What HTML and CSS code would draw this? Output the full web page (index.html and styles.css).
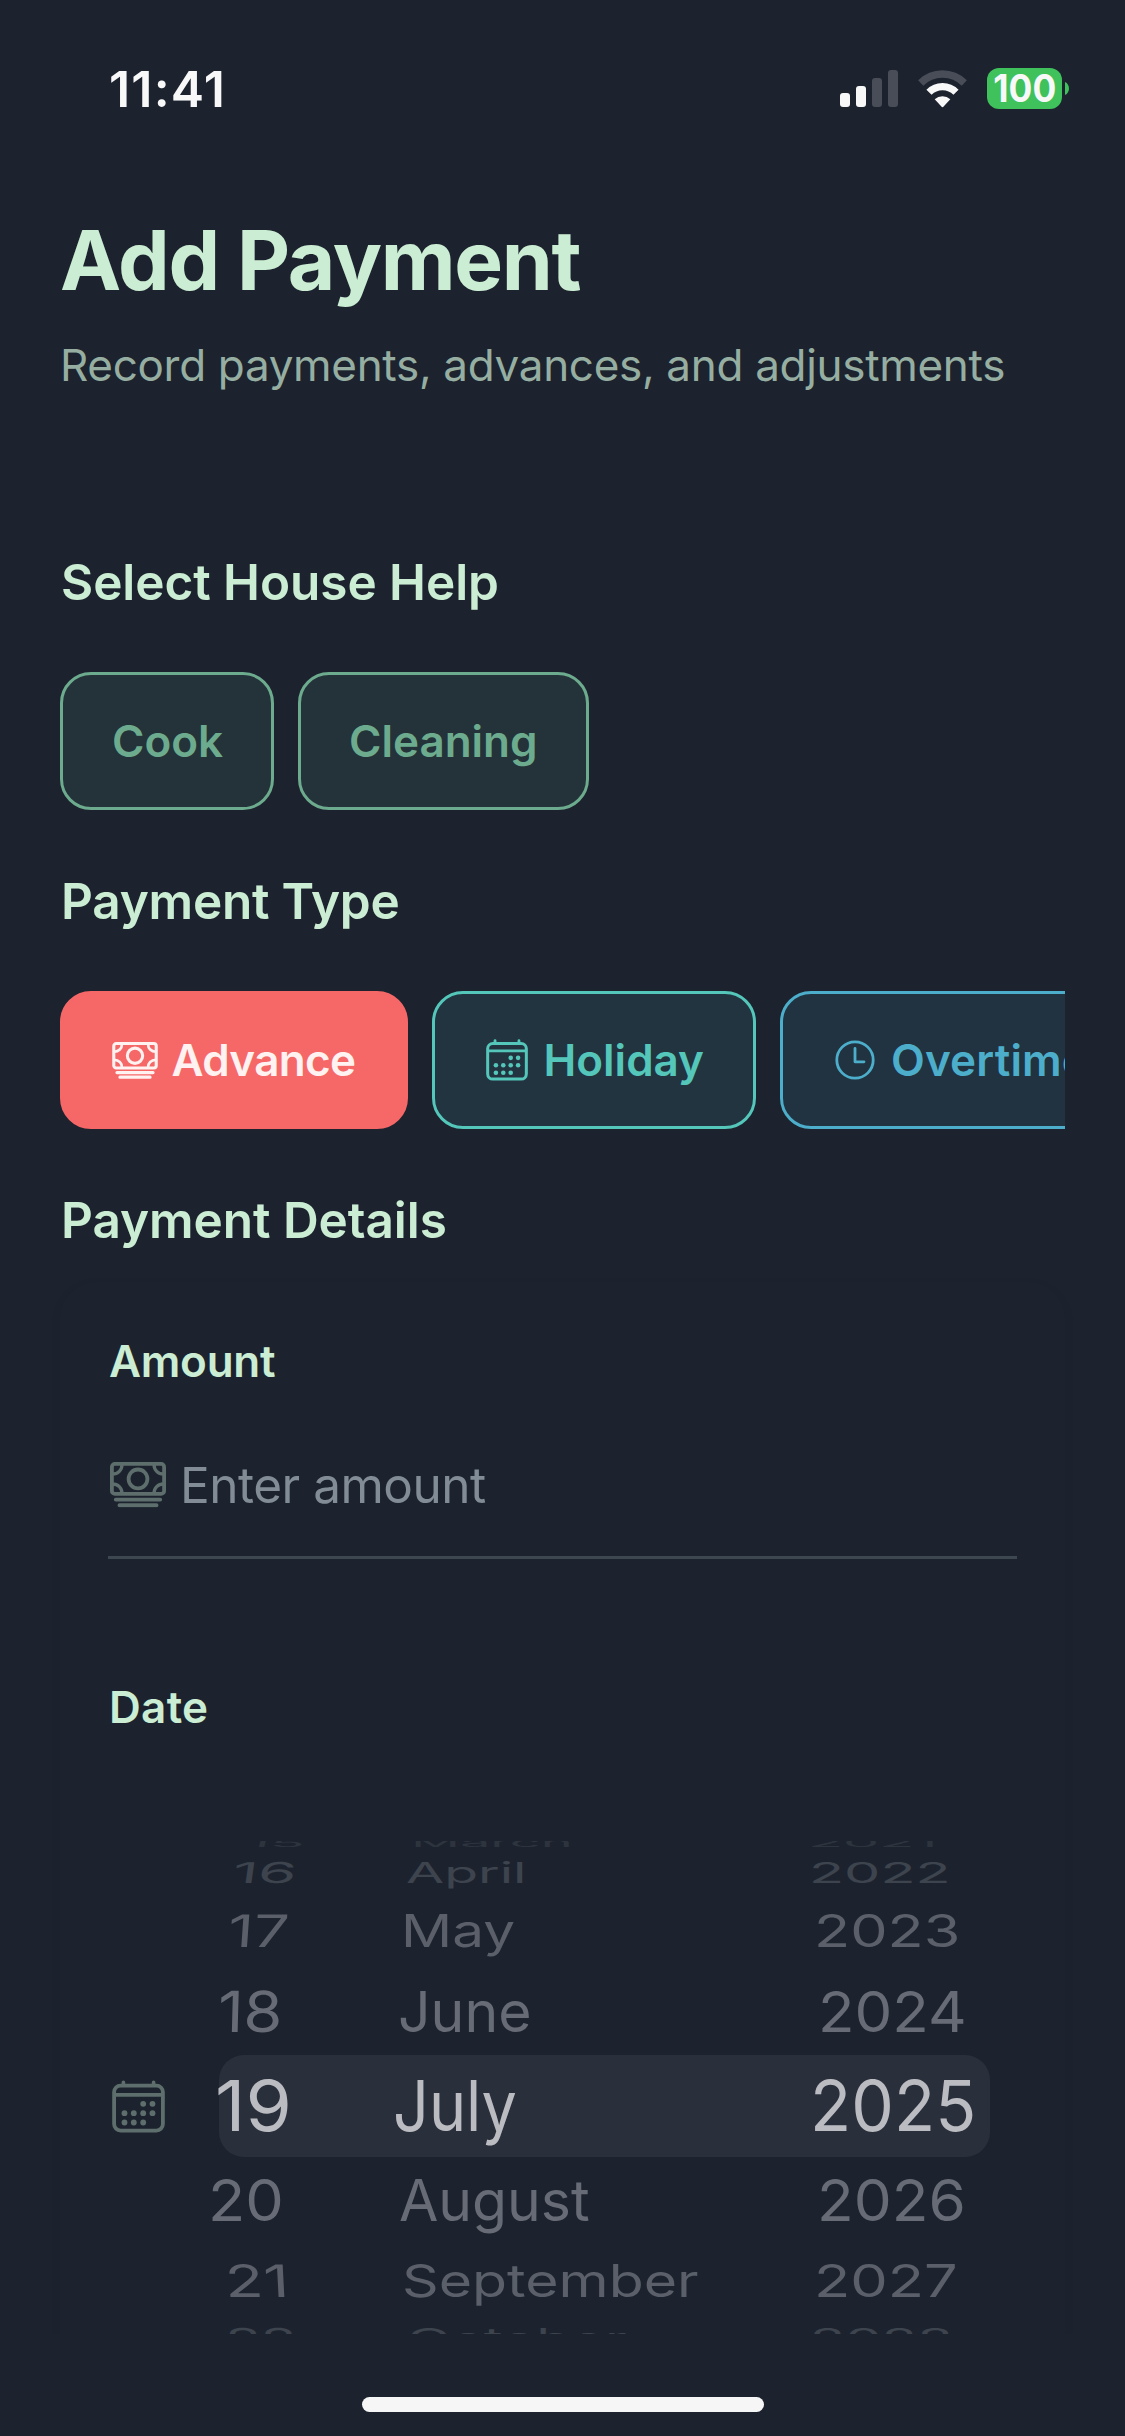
FILE: index.html
```html
<!DOCTYPE html>
<html lang="en">
<head>
<meta charset="utf-8">
<title>Add Payment</title>
<link rel="stylesheet" href="styles.css">
</head>
<body>
<svg class="defs" width="0" height="0" aria-hidden="true">
  <symbol id="banknote" viewBox="0 0 56 45.5">
    <g fill="none" stroke="currentColor" stroke-width="3.8" stroke-linecap="round">
      <rect x="1.9" y="1.9" width="52.2" height="30" rx="3"/>
      <circle cx="28" cy="16.9" r="9.4"/>
      <path d="M12 2.5C12 8 8 12 2.5 12M44 2.5C44 8 48 12 53.5 12M12 31.3C12 26 8 22 2.5 22M44 31.3C44 26 48 22 53.5 22" stroke-width="3.3"/>
      <path d="M5.8 37.6H50.2M9.5 43.2H46.5" stroke-width="3.9"/>
    </g>
  </symbol>
  <symbol id="calendar" viewBox="0 0 53 53">
    <g fill="none" stroke="currentColor" stroke-width="3.8" stroke-linecap="round">
      <rect x="2.1" y="5.6" width="48.8" height="45" rx="6.5"/>
      <path d="M3 14.9H50M11.4 2.2V5M41.6 2.2V5" stroke-width="3.6"/>
    </g>
    <g fill="currentColor">
      <circle cx="31.2" cy="23.8" r="2.9"/><circle cx="40.5" cy="23.8" r="2.9"/>
      <circle cx="12.5" cy="33.2" r="2.9"/><circle cx="21.8" cy="33.2" r="2.9"/><circle cx="31.2" cy="33.2" r="2.9"/><circle cx="40.5" cy="33.2" r="2.9"/>
      <circle cx="12.5" cy="42.5" r="2.9"/><circle cx="21.8" cy="42.5" r="2.9"/><circle cx="31.2" cy="42.5" r="2.9"/>
    </g>
  </symbol>
  <symbol id="clock" viewBox="0 0 40 40">
    <g fill="none" stroke="currentColor" stroke-width="2.8" stroke-linecap="round" stroke-linejoin="round">
      <circle cx="20" cy="20" r="18.2"/>
      <path d="M20 8.5V21.8H29"/>
    </g>
  </symbol>
</svg>

<header class="status">
  <span class="time">11:41</span>
  <div class="indicators">
    <svg class="signal" viewBox="0 0 58 37">
      <rect x="0" y="23" width="10" height="14" rx="3" fill="#f8f8f9"/>
      <rect x="16" y="16" width="10" height="21" rx="3" fill="#f8f8f9"/>
      <rect x="32" y="8" width="10" height="29" rx="3" fill="#484d57"/>
      <rect x="48" y="0" width="10" height="37" rx="3" fill="#484d57"/>
    </svg>
    <svg class="wifi" viewBox="0 0 51 38">
      <path d="M3.7 13A31 31 0 0 1 47.3 13" fill="none" stroke="#484d57" stroke-width="7.4"/>
      <path d="M12 22.3A19 19 0 0 1 39 22.3" fill="none" stroke="#f8f8f9" stroke-width="7.2"/>
      <path d="M17.7 29.2A11.5 11.5 0 0 1 33.3 29.2L26.6 36.6Q25.5 37.8 24.4 36.6Z" fill="#f8f8f9"/>
    </svg>
    <div class="battery"><span>100</span></div>
    <svg class="nub" viewBox="0 0 4 13"><path d="M0 0C5.3 2.2 5.3 10.8 0 13Z" fill="#3fc15c"/></svg>
  </div>
</header>

<main class="screen">
  <h1>Add Payment</h1>
  <p class="subtitle">Record payments, advances, and adjustments</p>

  <section>
    <h2>Select House Help</h2>
    <div class="chips">
      <button class="chip green cook">Cook</button>
      <button class="chip green cleaning">Cleaning</button>
    </div>
  </section>

  <section>
    <h2 class="type-title">Payment Type</h2>
    <div class="chips">
      <button class="chip advance"><svg class="icon-note"><use href="#banknote"/></svg><span>Advance</span></button>
      <button class="chip holiday"><svg class="icon-cal"><use href="#calendar"/></svg><span>Holiday</span></button>
      <button class="chip overtime"><svg class="icon-clock"><use href="#clock"/></svg><span>Overtime</span></button>
    </div>
  </section>

  <section>
    <h2>Payment Details</h2>
    <div class="card">
      <h3>Amount</h3>
      <div class="field">
        <svg class="field-icon"><use href="#banknote"/></svg>
        <span class="placeholder">Enter amount</span>
      </div>
      <h3 class="date-title">Date</h3>
      <div class="date-row">
        <svg class="date-icon"><use href="#calendar"/></svg>
        <div class="wheel">
          <div class="row r15"><span style="--x:47px;--s:.814">15</span><span style="--x:31.4px;--s:.774">March</span><span style="--x:8px;--s:.82">2021</span></div>
          <div class="row r16"><span style="--x:33px;--s:.886">16</span><span style="--x:26.2px;--s:.79">April</span><span style="--x:9px;--s:.822">2022</span></div>
          <div class="row r17"><span style="--x:28.3px;--s:.896">17</span><span style="--x:21px;--s:.81">May</span><span style="--x:13.5px;--s:.847">2023</span></div>
          <div class="row r18"><span style="--x:18.3px;--s:.901">18</span><span style="--x:17.5px;--s:.816">June</span><span style="--x:17.8px;--s:.856">2024</span></div>
          <div class="row r19"><span style="--x:15px;--s:1.069">19</span><span style="--x:13px;--s:.898">July</span><span style="--x:9.8px;--s:.966">2025</span></div>
          <div class="row r20"><span style="--x:7.6px;--s:.873">20</span><span style="--x:19.2px;--s:.815">August</span><span style="--x:17px;--s:.86">2026</span></div>
          <div class="row r21"><span style="--x:24.8px;--s:.9">21</span><span style="--x:22px;--s:.817">September</span><span style="--x:13.7px;--s:.85">2027</span></div>
          <div class="row r22"><span style="--x:25.5px;--s:.832">22</span><span style="--x:26.7px;--s:.82">October</span><span style="--x:9.5px;--s:.827">2028</span></div>
        </div>
      </div>
    </div>
  </section>
</main>

<footer class="bottom"><div class="home-bar"></div></footer>
</body>
</html>
```
FILE: styles.css
```css
* { box-sizing: border-box; }

body {
  margin: 0;
  width: 1125px;
  height: 2436px;
  overflow: hidden;
  display: flex;
  flex-direction: column;
  background: #1c232e;
  font-family: Inter, "Liberation Sans", sans-serif;
}

.defs { position: absolute; }
svg { display: block; flex: none; }
h1, h2, h3, p { margin: 0; white-space: nowrap; }

/* Status bar */
.status {
  flex: none;
  height: 178px;
  padding: 0 56px 0 109px;
  display: flex;
  justify-content: space-between;
  align-items: center;
}
.time {
  color: #f8f8f9;
  font-size: 50px;
  font-weight: 600;
  letter-spacing: 1.2px;
}
.indicators { display: flex; align-items: center; margin-top: -1px; }
.signal { width: 58px; height: 37px; }
.wifi { width: 51px; height: 38px; margin-left: 19px; }
.battery {
  display: flex;
  justify-content: center;
  width: 75px;
  height: 41px;
  margin-left: 19px;
  border-radius: 12px;
  background: #3fc15c;
  color: #f8f8f9;
  font-size: 38px;
  font-weight: 700;
  line-height: 41px;
}
.battery span { transform: scaleX(.93); }
.nub { width: 4px; height: 13px; margin-left: 3px; }

/* Scrolling content */
.screen {
  flex: none;
  height: 2156px;
  padding: 33px 60px 0;
  overflow: hidden;
}
h1 {
  height: 100px;
  color: #cbedd3;
  font-size: 82px;
  font-weight: 700;
  line-height: 100px;
  letter-spacing: -1.3px;
}
.subtitle {
  height: 60px;
  margin: 24px 0 157px;
  color: #96aea1;
  font-size: 44px;
  line-height: 60px;
  letter-spacing: -.31px;
}
h2 {
  height: 60px;
  margin-left: 1px;
  color: #cbedd3;
  font-size: 49.5px;
  font-weight: 600;
  line-height: 60px;
  letter-spacing: -.05px;
}
.type-title { letter-spacing: -.22px; }

.chips {
  display: flex;
  gap: 24px;
  height: 138px;
  margin: 60px 0 61px;
  overflow: hidden;
}
.chip {
  flex: none;
  display: flex;
  align-items: center;
  height: 138px;
  padding: 0;
  border: 3px solid currentColor;
  border-radius: 31px;
  font: 600 44px Inter, "Liberation Sans", sans-serif;
}
.green { color: #6dab8e; background: #243339; }
.cook { width: 214px; padding-left: 49px; }
.cleaning { width: 291px; padding-left: 48px; }
.advance {
  width: 348px;
  padding-left: 49px;
  border-color: #f66767;
  background: #f66767;
  color: #fff2f1;
  letter-spacing: -.66px;
}
.holiday { width: 324px; padding-left: 51px; color: #54c6ba; background: #223440; }
.overtime { width: 380px; padding-left: 52px; color: #4caeca; background: #213341; }
.icon-note { width: 46px; height: 37px; margin-right: 13.5px; }
.icon-cal { width: 42px; height: 42px; margin-right: 15.5px; }
.icon-clock { width: 40px; height: 40px; margin-right: 16px; }
.overtime span { letter-spacing: .15px; }

/* Details card */
.card {
  height: 1200px;
  margin-top: 32px;
  padding: 49px 48px 0;
  border-radius: 36px;
  background: #1c232e;
  box-shadow: 0 4px 12px rgba(0, 0, 0, .06);
}
h3 {
  height: 60px;
  margin-left: 1px;
  color: #cbedd3;
  font-size: 44px;
  font-weight: 600;
  line-height: 60px;
  letter-spacing: -.26px;
}
.field {
  display: flex;
  align-items: center;
  height: 119px;
  margin-top: 49px;
  padding: 0 0 26px 2px;
  border-bottom: 3px solid #3c474f;
}
.field-icon { width: 56px; height: 45.5px; margin-right: 14px; color: #5d6e6c; }
.placeholder { color: #818c97; font-size: 49.5px; letter-spacing: -.5px; }
.date-title { margin-top: 118px; letter-spacing: .3px; }

.date-row { display: flex; margin-top: 104px; }
.date-icon {
  width: 53px;
  height: 53px;
  margin: 238.5px 35.5px 0 3.5px;
  color: #5d6e6c;
}
.wheel {
  width: 800px;
  height: 493px;
  overflow: hidden;
  color: #676b75;
  font-size: 70px;
  line-height: 1;
}
.row {
  display: grid;
  grid-template-columns: 180px 420px 200px;
  align-content: center;
  height: var(--h);
}
.row span {
  justify-self: start;
  margin: -35px 0 -35px var(--x);
  transform: skewX(var(--k, 0deg)) scale(var(--s), var(--v));
  transform-origin: 0 50%;
}
.row span:not(:first-child) { --k: 0deg; }
.r15 { --h: 4px; --v: .16; --k: -14deg; color: #2e343e; }
.r16 { --h: 56px; --v: .41; --k: -8deg; color: #3e444e; }
.r17 { --h: 59px; --v: .64; --k: -4deg; color: #5a5f69; }
.r18 { --h: 95px; --v: .81; --k: -1.5deg; padding-top: 8px; }
.r19 {
  --h: 102px;
  --v: 1;
  width: 771px;
  margin-left: 19px;
  border-radius: 25px;
  background: #2a303b;
  color: #bbbcc1;
}
.r19 span { margin-left: calc(var(--x) - 19px); }
.r19 span:not(:first-child) { margin-left: var(--x); }
.r19 { grid-template-columns: 161px 420px 190px; }
.r20 { --h: 85px; --v: .82; }
.r21 { --h: 78px; --v: .64; --k: 3deg; color: #5a5f69; }
.r22 { --h: 38px; --v: .41; --k: 6deg; color: #3e444e; }

/* Home indicator */
.bottom {
  flex: 1;
  display: flex;
  justify-content: center;
  align-items: flex-start;
  padding-top: 63px;
}
.home-bar { width: 402px; height: 15px; border-radius: 8px; background: #f6f6f7; }
```
